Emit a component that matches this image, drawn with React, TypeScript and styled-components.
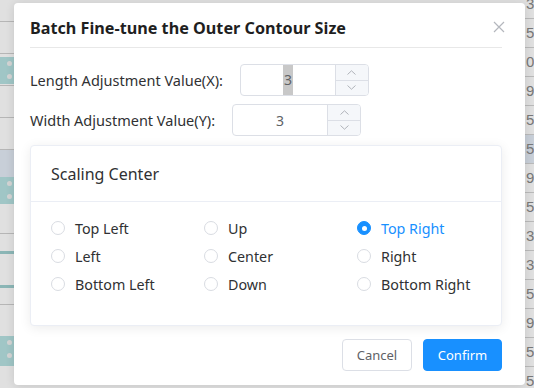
import React, { useState } from 'react';
import styled, { createGlobalStyle } from 'styled-components';

const GlobalStyle = createGlobalStyle`
  html, body {
    margin: 0;
    padding: 0;
    width: 534px;
    height: 388px;
    overflow: hidden;
    background: #ffffff;
    font-family: 'Noto Sans', 'Open Sans', sans-serif;
  }
`;

type CellKind = 'plain' | 'cyan' | 'blue' | 'gap';

// left frozen column of the table behind the dialog
const leftCells: { h: number; kind: CellKind; line?: 'gray' | 'cyan' }[] = [
  { h: 22, kind: 'plain', line: 'gray' },
  { h: 32, kind: 'plain', line: 'gray' },
  { h: 3, kind: 'gap' },
  { h: 27, kind: 'cyan' },
  { h: 2, kind: 'gap', line: 'gray' },
  { h: 32, kind: 'plain', line: 'gray' },
  { h: 32, kind: 'plain', line: 'gray' },
  { h: 27, kind: 'blue' },
  { h: 27, kind: 'cyan' },
  { h: 30, kind: 'plain', line: 'gray' },
  { h: 20, kind: 'plain', line: 'cyan' },
  { h: 34, kind: 'plain', line: 'cyan' },
  { h: 17, kind: 'plain', line: 'gray' },
  { h: 31, kind: 'plain' },
  { h: 30, kind: 'cyan' },
  { h: 20, kind: 'plain' },
];

const numbers = ['37', '59', '03', '90', '5', '5', '95', '59', '34', '34', '59', '95', '59', '5'];

const positions = [
  ['Top Left', 'Up', 'Top Right'],
  ['Left', 'Center', 'Right'],
  ['Bottom Left', 'Down', 'Bottom Right'],
];

const ChevronUp = () => (
  <svg width="9" height="5" viewBox="0 0 9 5">
    <path d="M0.5 4.5 L4.5 0.8 L8.5 4.5" stroke="#a8abb2" strokeWidth="0.9" fill="none" />
  </svg>
);

const ChevronDown = () => (
  <svg width="9" height="5" viewBox="0 0 9 5">
    <path d="M0.5 0.5 L4.5 4.2 L8.5 0.5" stroke="#a8abb2" strokeWidth="0.9" fill="none" />
  </svg>
);

const App: React.FC = () => {
  const [center, setCenter] = useState('Top Right');

  return (
    <>
      <GlobalStyle />
      <Page>
        <Backdrop>
          <LeftColumn>
            {leftCells.map((c, i) => (
              <LeftCell key={i} $h={c.h} $kind={c.kind} $line={c.line}>
                {c.kind === 'cyan' && (
                  <>
                    <Dot $top={4} />
                    <Dot $top={17} />
                  </>
                )}
              </LeftCell>
            ))}
          </LeftColumn>
          <MidColumn />
          <RightColumn>
            {numbers.map((n, i) => (
              <NumRow key={i} $blue={i === 5}>{n}</NumRow>
            ))}
          </RightColumn>
        </Backdrop>
        <Overlay>
          <Dialog>
            <Header>
              <Title>Batch Fine-tune the Outer Contour Size</Title>
              <CloseButton aria-label="close">
                <svg width="12" height="12" viewBox="0 0 12 12">
                  <path d="M1 1 L11 11 M11 1 L1 11" stroke="#b4b7bd" strokeWidth="1.2" fill="none" />
                </svg>
              </CloseButton>
            </Header>
            <Body>
              <FieldRow>
                <FieldLabel>Length Adjustment Value(X):</FieldLabel>
                <NumberInput>
                  <InputText>
                    <Selected>3</Selected>
                  </InputText>
                  <Spinner>
                    <SpinBtn><ChevronUp /></SpinBtn>
                    <SpinBtn $bottom><ChevronDown /></SpinBtn>
                  </Spinner>
                </NumberInput>
              </FieldRow>
              <FieldRow>
                <FieldLabel>Width Adjustment Value(Y):</FieldLabel>
                <NumberInput>
                  <InputText>3</InputText>
                  <Spinner>
                    <SpinBtn><ChevronUp /></SpinBtn>
                    <SpinBtn $bottom><ChevronDown /></SpinBtn>
                  </Spinner>
                </NumberInput>
              </FieldRow>
              <Card>
                <CardHeader>Scaling Center</CardHeader>
                <CardBody>
                  {positions.flat().map((p) => (
                    <RadioItem key={p} onClick={() => setCenter(p)}>
                      <RadioCircle $checked={center === p} />
                      <RadioLabel $checked={center === p}>{p}</RadioLabel>
                    </RadioItem>
                  ))}
                </CardBody>
              </Card>
            </Body>
            <Footer>
              <Button $width={70}>Cancel</Button>
              <Button $primary $width={79}>Confirm</Button>
            </Footer>
          </Dialog>
        </Overlay>
      </Page>
    </>
  );
};

const Page = styled.div`
  position: relative;
  width: 534px;
  height: 388px;
  overflow: hidden;
`;

const Backdrop = styled.div`
  display: flex;
  height: 388px;
`;

const LeftColumn = styled.div`
  width: 14px;
  display: flex;
  flex-direction: column;
`;

const cellBg: Record<CellKind, string> = {
  plain: '#ffffff',
  gap: '#ffffff',
  cyan: '#b7e2e2',
  blue: '#e4ecf6',
};

const LeftCell = styled.div<{ $h: number; $kind: CellKind; $line?: 'gray' | 'cyan' }>`
  position: relative;
  flex-shrink: 0;
  box-sizing: border-box;
  height: ${(p) => p.$h}px;
  background: ${(p) => cellBg[p.$kind]};
  border-bottom: ${(p) =>
    p.$line === 'cyan' ? '3px solid #9fd0d0' : p.$line === 'gray' ? '1px solid #d0d0d0' : 'none'};
`;

const Dot = styled.span<{ $top: number }>`
  position: absolute;
  left: 7px;
  top: ${(p) => p.$top}px;
  width: 5px;
  height: 5px;
  border-radius: 50%;
  background: #f2f2f2;
`;

const MidColumn = styled.div`
  flex: 1;
`;

const RightColumn = styled.div`
  width: 9px;
  display: flex;
  flex-direction: column;
  margin-top: -10px;
`;

const NumRow = styled.div<{ $blue?: boolean }>`
  flex-shrink: 0;
  height: 29px;
  box-sizing: border-box;
  border-bottom: 1px solid #d4d4d4;
  background: ${(p) => (p.$blue ? '#e4ecf6' : '#ffffff')};
  padding-left: 1px;
  font-size: 15px;
  line-height: 28px;
  color: #8a8a8a;
  white-space: nowrap;
  font-family: 'Liberation Sans', sans-serif;
`;

const Overlay = styled.div`
  position: absolute;
  inset: 0;
  background: rgba(0, 0, 0, 0.12);
  padding: 3px 0 0 14px;
`;

const Dialog = styled.div`
  width: 511px;
  height: 382px;
  box-sizing: border-box;
  background: #ffffff;
  border-radius: 4px;
  box-shadow: 0 1px 10px rgba(0, 0, 0, 0.12);
  padding: 0 23px 0 16px;
  display: flex;
  flex-direction: column;
`;

const Header = styled.div`
  display: flex;
  align-items: center;
  justify-content: space-between;
  height: 44px;
  border-bottom: 1px solid #e8e8e8;
`;

const Title = styled.div`
  font-size: 16.2px;
  font-weight: 700;
  color: #1f1f1f;
  line-height: 22px;
  margin-top: 6px;
`;

const CloseButton = styled.div`
  display: flex;
  margin-right: -3px;
  margin-top: 4px;
`;

const Body = styled.div`
  display: flex;
  flex-direction: column;
  padding-top: 16px;
`;

const FieldRow = styled.div`
  display: flex;
  align-items: center;
  gap: 17px;
  margin-bottom: 8px;
`;

const FieldLabel = styled.div`
  font-size: 14.5px;
  color: #303133;
`;

const NumberInput = styled.div`
  display: flex;
  width: 129px;
  height: 32px;
  box-sizing: border-box;
  border: 1px solid #dcdfe6;
  border-radius: 4px;
  overflow: hidden;
`;

const InputText = styled.div`
  flex: 1;
  display: flex;
  align-items: center;
  justify-content: center;
  font-size: 14px;
  color: #606266;
`;

const Selected = styled.span`
  background: #c8c8c8;
  line-height: 30px;
  padding: 0 1px;
`;

const Spinner = styled.div`
  width: 32px;
  display: flex;
  flex-direction: column;
  border-left: 1px solid #dcdfe6;
  background: #f5f7fa;
`;

const SpinBtn = styled.div<{ $bottom?: boolean }>`
  flex: 1;
  display: flex;
  align-items: center;
  justify-content: center;
  border-top: ${(p) => (p.$bottom ? '1px solid #dcdfe6' : 'none')};
`;

const Card = styled.div`
  margin-top: 1px;
  border: 1px solid #ebeef5;
  border-radius: 4px;
  box-shadow: 0 2px 12px rgba(0, 0, 0, 0.08);
  background: #ffffff;
`;

const CardHeader = styled.div`
  height: 55px;
  display: flex;
  align-items: center;
  padding-left: 20px;
  font-size: 16px;
  color: #303133;
  border-bottom: 1px solid #ebeef5;
`;

const CardBody = styled.div`
  display: grid;
  grid-template-columns: repeat(3, 153px);
  grid-auto-rows: 28px;
  padding: 12px 20px 27px;
`;

const RadioItem = styled.label`
  display: flex;
  align-items: center;
  gap: 10px;
  cursor: pointer;
`;

const RadioCircle = styled.span<{ $checked: boolean }>`
  width: 14px;
  height: 14px;
  box-sizing: border-box;
  border-radius: 50%;
  border: 1px solid ${(p) => (p.$checked ? '#1890ff' : '#d9dce2')};
  background: ${(p) => (p.$checked ? '#1890ff' : '#ffffff')};
  display: flex;
  align-items: center;
  justify-content: center;
  &::after {
    content: '';
    width: 5px;
    height: 5px;
    border-radius: 50%;
    background: #ffffff;
    display: ${(p) => (p.$checked ? 'block' : 'none')};
  }
`;

const RadioLabel = styled.span<{ $checked: boolean }>`
  font-size: 14.3px;
  color: ${(p) => (p.$checked ? '#1890ff' : '#303133')};
`;

const Footer = styled.div`
  display: flex;
  justify-content: flex-end;
  gap: 11px;
  margin-top: 13px;
`;

const Button = styled.button<{ $primary?: boolean; $width: number }>`
  height: 32px;
  width: ${(p) => p.$width}px;
  padding: 0;
  box-sizing: border-box;
  border-radius: 4px;
  font-family: 'Noto Sans', sans-serif;
  font-size: 13px;
  border: 1px solid ${(p) => (p.$primary ? '#1890ff' : '#dcdfe6')};
  background: ${(p) => (p.$primary ? '#1890ff' : '#ffffff')};
  color: ${(p) => (p.$primary ? '#ffffff' : '#606266')};
`;

export default App;
